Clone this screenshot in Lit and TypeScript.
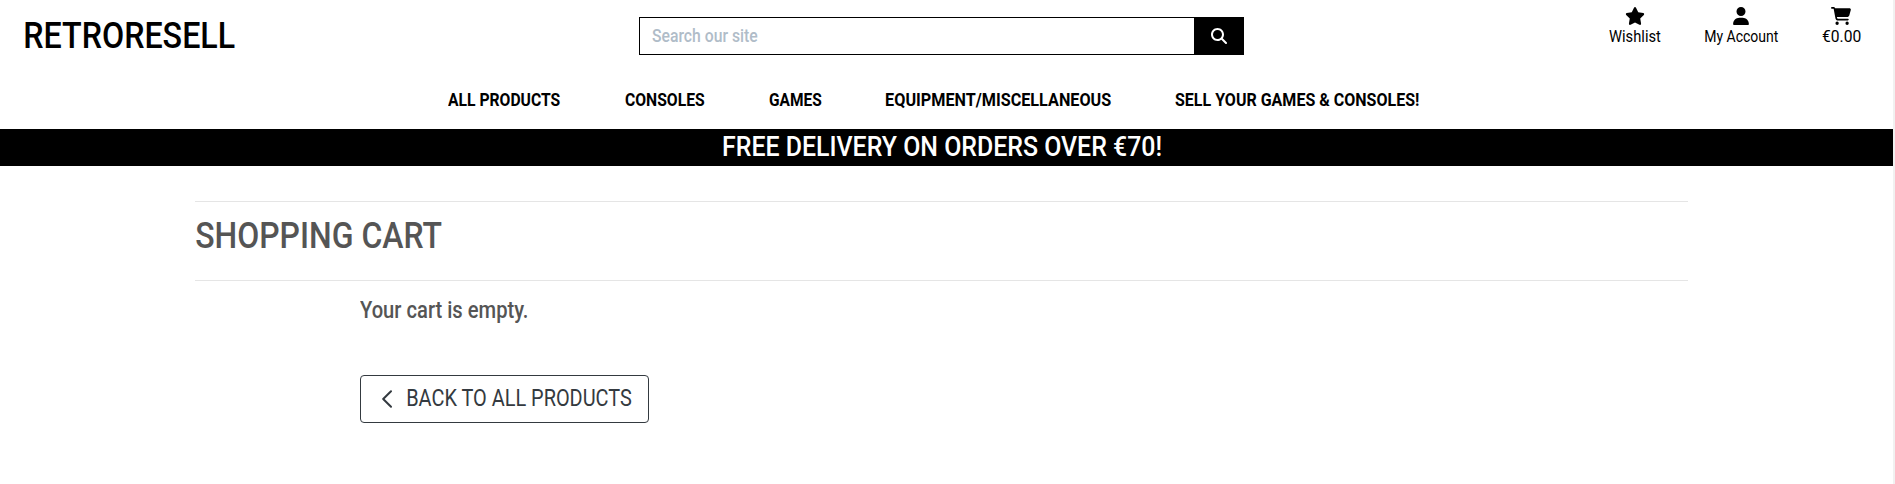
import { LitElement, html, css } from "lit";
import { customElement, property, query } from "lit/decorators.js";

/** A single line of text condensed so that its glyphs span exactly `span` pixels. */
@customElement("fit-text")
class FitText extends LitElement {
  @property({ type: Number }) span = 100;
  @query(".line") line!: HTMLElement;

  static styles = css`
    :host { display: block; flex: none; white-space: nowrap; }
    .line { display: inline-block; transform-origin: 0 50%; vertical-align: top; }
  `;

  firstUpdated() {
    this.fit();
    document.fonts.ready.then(() => this.fit());
  }

  fit() {
    const cs = getComputedStyle(this);
    const ctx = document.createElement("canvas").getContext("2d")!;
    ctx.font = `${cs.fontWeight} ${cs.fontSize} ${cs.fontFamily}`;
    const m = ctx.measureText((this.textContent ?? "").trim());
    const left = -m.actualBoundingBoxLeft;
    const scale = this.span / (m.actualBoundingBoxRight + m.actualBoundingBoxLeft);
    this.style.width = `${this.span}px`;
    this.line.style.transform = `translateX(${left * scale * -1}px) scaleX(${scale})`;
  }

  render() {
    return html`<span class="line"><slot></slot></span>`;
  }
}

@customElement("app-root")
class AppRoot extends LitElement {
  static styles = css`
    * { box-sizing: border-box; }
    :host {
      display: flex;
      height: 484px;
      overflow: hidden;
      background: #fff;
      color: #000;
      font-family: Roboto, "Noto Sans", sans-serif;
    }
    svg { display: block; }
    .page { flex: 1; min-width: 0; }
    .track { width: 2px; background: #f1f1f1; }
    .top { height: 72px; display: grid; grid-template-columns: 639px 605px 1fr; align-items: start; }
    .logo { padding: 13px 0 0 24.5px; font-size: 36.5px; font-weight: 500; line-height: 45px; }
    .search { margin-top: 17px; height: 38px; display: flex; border: 1px solid #000; }
    .field { flex: 1; padding-left: 12px; font-size: 18px; font-weight: 500; line-height: 36px; color: #b0bcc8; }
    .go { width: 49px; background: #000; display: flex; align-items: center; justify-content: center; }
    .links { display: flex; justify-content: flex-end; gap: 44px; padding: 7px 32.5px 0 0; }
    .link { display: flex; flex-direction: column; align-items: center; font-size: 16.5px; line-height: 24px; }
    .nav { height: 57px; display: flex; gap: 64.5px; padding-left: 448px; font-size: 18.3px; font-weight: 700; line-height: 56px; }
    .banner { height: 37px; background: #000; color: #fff; font-size: 27px; font-weight: 500; line-height: 36px; padding-left: 723px; }
    .main { margin: 35px 205px 0 195px; color: #555; }
    .title { height: 80px; border: solid #e5e5e5; border-width: 1px 0; padding: 13px 0 0 1px; font-size: 37px; font-weight: 500; line-height: 42px; margin: 0; }
    .body { padding: 14px 0 0 165px; font-size: 24px; font-weight: 500; }
    .empty { line-height: 30px; margin-bottom: 50px; }
    .back {
      width: 289px; height: 48px; display: flex; align-items: center; gap: 15px; padding-left: 21px;
      border: 1px solid #343a40; border-radius: 4px; color: #343a40; font-weight: 400; line-height: 44px;
    }
    .back fit-text { height: 46px; }
  `;

  render() {
    return html`
      <div class="page">
        <header>
          <div class="top">
            <div class="logo"><fit-text span="209.500">RETRORESELL</fit-text></div>
            <div class="search">
              <div class="field"><fit-text span="106">Search our site</fit-text></div>
              <div class="go">
                <svg width="16" height="16" viewBox="0 0 512 512" fill="#fff"><path d="M416 208c0 45.900-14.900 88.300-40 122.700L502.600 457.400c12.500 12.500 12.500 32.800 0 45.300s-32.800 12.500-45.300 0L330.700 376c-34.400 25.200-76.800 40-122.700 40C93.100 416 0 322.900 0 208S93.100 0 208 0S416 93.100 416 208zM208 352a144 144 0 1 0 0-288 144 144 0 1 0 0 288z"/></svg>
              </div>
            </div>
            <div class="links">
              <div class="link">
                <svg width="20" height="18" viewBox="0 0 576 512"><path d="M316.900 18C311.600 7 300.400 0 288.100 0s-23.400 7-28.800 18L195 150.300 51.400 171.500c-12 1.800-22 10.200-25.700 21.700s-.7 24.200 7.900 32.700L137.800 329 113.200 474.700c-2 12 3 24.200 12.900 31.300s23 8 33.800 2.300l128.300-68.500 128.300 68.500c10.800 5.700 23.900 4.900 33.800-2.300s14.900-19.300 12.900-31.300L438.500 329 542.700 225.900c8.600-8.500 11.700-21.200 7.900-32.700s-13.700-19.900-25.700-21.700L381.200 150.300 316.900 18z"/></svg>
                <fit-text span="51.500">Wishlist</fit-text>
              </div>
              <div class="link">
                <svg width="16" height="18" viewBox="0 0 448 512"><path d="M224 256A128 128 0 1 0 224 0a128 128 0 1 0 0 256zm-45.700 48C79.800 304 0 383.800 0 482.300C0 498.700 13.300 512 29.700 512H418.300c16.400 0 29.700-13.300 29.700-29.700C448 383.800 368.200 304 269.700 304H178.300z"/></svg>
                <fit-text span="73">My Account</fit-text>
              </div>
              <div class="link">
                <svg width="20" height="18" viewBox="0 0 576 512"><path d="M0 24C0 10.700 10.700 0 24 0H69.500c22 0 41.500 12.800 50.600 32h411c26.300 0 45.500 25 38.600 50.400l-41 152.300c-8.500 31.400-37 53.300-69.500 53.300H170.700l5.400 28.500c2.200 11.300 12.100 19.500 23.600 19.500H488c13.300 0 24 10.700 24 24s-10.700 24-24 24H199.700c-34.600 0-64.300-24.600-70.700-58.500L77.400 54.500c-.7-3.800-4-6.500-7.900-6.500H24C10.700 48 0 37.300 0 24zM128 464a48 48 0 1 1 96 0 48 48 0 1 1-96 0zm336-48a48 48 0 1 1 0 96 48 48 0 1 1 0-96z"/></svg>
                <fit-text span="39">€0.00</fit-text>
              </div>
            </div>
          </div>
          <nav class="nav">
            <fit-text span="112">ALL PRODUCTS</fit-text>
            <fit-text span="79.500">CONSOLES</fit-text>
            <fit-text span="52.500">GAMES</fit-text>
            <fit-text span="225">EQUIPMENT/MISCELLANEOUS</fit-text>
            <fit-text span="243.500">SELL YOUR GAMES &amp; CONSOLES!</fit-text>
          </nav>
        </header>
        <div class="banner"><fit-text span="438">FREE DELIVERY ON ORDERS OVER €70!</fit-text></div>
        <main class="main">
          <h2 class="title"><fit-text span="245.500">SHOPPING CART</fit-text></h2>
          <div class="body">
            <div class="empty"><fit-text span="167">Your cart is empty.</fit-text></div>
            <div class="back">
              <svg width="10" height="18" viewBox="0 0 10 18" fill="none" stroke="#343a40" stroke-width="2" stroke-linecap="round" stroke-linejoin="round"><path d="M9 1.200L1.200 9L9 16.800"/></svg>
              <fit-text span="225">BACK TO ALL PRODUCTS</fit-text>
            </div>
          </div>
        </main>
      </div>
      <div class="track"></div>
    `;
  }
}
